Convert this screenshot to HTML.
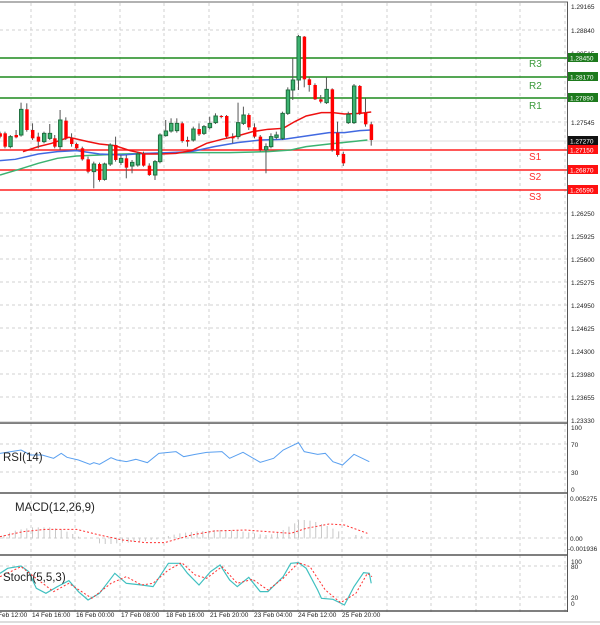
<!DOCTYPE html>
<html><head><meta charset="utf-8"><style>
html,body{margin:0;padding:0;background:#fff;width:600px;height:625px;overflow:hidden}
svg{display:block;font-family:"Liberation Sans",sans-serif}
</style></head><body>
<svg width="600" height="625" viewBox="0 0 600 625">
<rect width="600" height="625" fill="#fff"/>
<line x1="0" y1="2" x2="568" y2="2" stroke="#999" stroke-width="1.5"/>
<g stroke="#d0d0d0" stroke-width="1" stroke-dasharray="3,3">
<line x1="0" x2="567" y1="30" y2="30"/><line x1="0" x2="567" y1="122" y2="122"/><line x1="0" x2="567" y1="213" y2="213"/><line x1="0" x2="567" y1="236" y2="236"/><line x1="0" x2="567" y1="259" y2="259"/><line x1="0" x2="567" y1="282" y2="282"/><line x1="0" x2="567" y1="305" y2="305"/><line x1="0" x2="567" y1="328" y2="328"/><line x1="0" x2="567" y1="351" y2="351"/><line x1="0" x2="567" y1="374" y2="374"/><line x1="0" x2="567" y1="397" y2="397"/>
<line x1="0" x2="567" y1="444" y2="444"/><line x1="0" x2="567" y1="472" y2="472"/><line x1="0" x2="567" y1="538" y2="538"/><line x1="0" x2="567" y1="566" y2="566"/><line x1="0" x2="567" y1="597" y2="597"/>
<line x1="31" x2="31" y1="3" y2="612"/><line x1="75" x2="75" y1="3" y2="612"/><line x1="120" x2="120" y1="3" y2="612"/><line x1="164" x2="164" y1="3" y2="612"/><line x1="209" x2="209" y1="3" y2="612"/><line x1="253" x2="253" y1="3" y2="612"/><line x1="298" x2="298" y1="3" y2="612"/><line x1="342" x2="342" y1="3" y2="612"/><line x1="387" x2="387" y1="3" y2="612"/><line x1="431" x2="431" y1="3" y2="612"/><line x1="476" x2="476" y1="3" y2="612"/><line x1="520" x2="520" y1="3" y2="612"/><line x1="565" x2="565" y1="3" y2="612"/>
</g>
<line x1="0" x2="567" y1="141" y2="141" stroke="#ddd" stroke-width="1"/>
<!-- levels -->
<g stroke-width="1.5">
<line x1="0" x2="567" y1="58" y2="58" stroke="#1d8a1d"/>
<line x1="0" x2="567" y1="77" y2="77" stroke="#1d8a1d"/>
<line x1="0" x2="567" y1="98" y2="98" stroke="#1d8a1d"/>
<line x1="0" x2="567" y1="150" y2="150" stroke="#ff2020"/>
<line x1="0" x2="567" y1="170" y2="170" stroke="#ff2020"/>
<line x1="0" x2="567" y1="190" y2="190" stroke="#ff2020"/>
</g>
<g font-size="10" fill="#3c9a3c"><text x="529" y="67">R3</text><text x="529" y="89">R2</text><text x="529" y="109">R1</text></g>
<g font-size="10" fill="#ff3030"><text x="529" y="160">S1</text><text x="529" y="180">S2</text><text x="529" y="200">S3</text></g>
<!-- main plot in zoom coords -->
<g transform="scale(0.3827,0.3333)">
<g fill="none" stroke-width="1.5" vector-effect="non-scaling-stroke">
<polyline vector-effect="non-scaling-stroke" stroke="#3cb371" points="0,525 50,508 100,490 150,475 200,468 260,465 320,462 400,460 500,458 600,458 700,455 760,450 800,440 860,432 920,425 960,420"/>
<polyline vector-effect="non-scaling-stroke" stroke="#4169e1" points="0,482 40,478 100,462 150,455 200,452 260,462 320,465 380,460 440,458 500,455 560,440 620,428 680,420 740,418 800,408 860,398 900,398 940,392 970,390"/>
<polyline vector-effect="non-scaling-stroke" stroke="#ee1111" points="60,455 100,440 135,430 180,412 230,425 260,432 300,437 340,452 380,462 420,462 460,460 500,452 540,430 580,418 620,408 660,395 700,388 740,385 770,365 800,348 840,338 870,338 900,342 940,340 970,336"/>
</g>
<g stroke="#555" stroke-width="1">
<line vector-effect="non-scaling-stroke" x1="0" x2="0" y1="395" y2="415"/><line vector-effect="non-scaling-stroke" x1="13" x2="13" y1="395" y2="445"/><line vector-effect="non-scaling-stroke" x1="27" x2="27" y1="405" y2="445"/><line vector-effect="non-scaling-stroke" x1="42" x2="42" y1="390" y2="415"/><line vector-effect="non-scaling-stroke" x1="55" x2="55" y1="308" y2="410"/><line vector-effect="non-scaling-stroke" x1="70" x2="70" y1="310" y2="395"/><line vector-effect="non-scaling-stroke" x1="85" x2="85" y1="370" y2="420"/><line vector-effect="non-scaling-stroke" x1="100" x2="100" y1="398" y2="445"/><line vector-effect="non-scaling-stroke" x1="115" x2="115" y1="395" y2="430"/><line vector-effect="non-scaling-stroke" x1="130" x2="130" y1="372" y2="420"/><line vector-effect="non-scaling-stroke" x1="143" x2="143" y1="405" y2="445"/><line vector-effect="non-scaling-stroke" x1="157" x2="157" y1="330" y2="450"/><line vector-effect="non-scaling-stroke" x1="172" x2="172" y1="352" y2="420"/><line vector-effect="non-scaling-stroke" x1="187" x2="187" y1="400" y2="440"/><line vector-effect="non-scaling-stroke" x1="200" x2="200" y1="428" y2="450"/><line vector-effect="non-scaling-stroke" x1="215" x2="215" y1="440" y2="482"/><line vector-effect="non-scaling-stroke" x1="230" x2="230" y1="470" y2="520"/><line vector-effect="non-scaling-stroke" x1="245" x2="245" y1="485" y2="565"/><line vector-effect="non-scaling-stroke" x1="260" x2="260" y1="488" y2="545"/><line vector-effect="non-scaling-stroke" x1="273" x2="273" y1="488" y2="542"/><line vector-effect="non-scaling-stroke" x1="288" x2="288" y1="430" y2="498"/><line vector-effect="non-scaling-stroke" x1="302" x2="302" y1="410" y2="485"/><line vector-effect="non-scaling-stroke" x1="316" x2="316" y1="465" y2="495"/><line vector-effect="non-scaling-stroke" x1="330" x2="330" y1="465" y2="535"/><line vector-effect="non-scaling-stroke" x1="345" x2="345" y1="480" y2="520"/><line vector-effect="non-scaling-stroke" x1="360" x2="360" y1="455" y2="500"/><line vector-effect="non-scaling-stroke" x1="375" x2="375" y1="455" y2="500"/><line vector-effect="non-scaling-stroke" x1="390" x2="390" y1="490" y2="528"/><line vector-effect="non-scaling-stroke" x1="405" x2="405" y1="480" y2="540"/><line vector-effect="non-scaling-stroke" x1="418" x2="418" y1="400" y2="490"/><line vector-effect="non-scaling-stroke" x1="433" x2="433" y1="360" y2="410"/><line vector-effect="non-scaling-stroke" x1="447" x2="447" y1="355" y2="398"/><line vector-effect="non-scaling-stroke" x1="462" x2="462" y1="355" y2="398"/><line vector-effect="non-scaling-stroke" x1="476" x2="476" y1="365" y2="428"/><line vector-effect="non-scaling-stroke" x1="490" x2="490" y1="410" y2="440"/><line vector-effect="non-scaling-stroke" x1="505" x2="505" y1="380" y2="425"/><line vector-effect="non-scaling-stroke" x1="520" x2="520" y1="370" y2="408"/><line vector-effect="non-scaling-stroke" x1="533" x2="533" y1="375" y2="405"/><line vector-effect="non-scaling-stroke" x1="548" x2="548" y1="350" y2="388"/><line vector-effect="non-scaling-stroke" x1="563" x2="563" y1="340" y2="372"/><line vector-effect="non-scaling-stroke" x1="578" x2="578" y1="345" y2="355"/><line vector-effect="non-scaling-stroke" x1="592" x2="592" y1="345" y2="415"/><line vector-effect="non-scaling-stroke" x1="608" x2="608" y1="400" y2="430"/><line vector-effect="non-scaling-stroke" x1="622" x2="622" y1="308" y2="418"/><line vector-effect="non-scaling-stroke" x1="636" x2="636" y1="320" y2="375"/><line vector-effect="non-scaling-stroke" x1="650" x2="650" y1="340" y2="390"/><line vector-effect="non-scaling-stroke" x1="665" x2="665" y1="370" y2="415"/><line vector-effect="non-scaling-stroke" x1="680" x2="680" y1="405" y2="455"/><line vector-effect="non-scaling-stroke" x1="695" x2="695" y1="430" y2="520"/><line vector-effect="non-scaling-stroke" x1="708" x2="708" y1="400" y2="445"/><line vector-effect="non-scaling-stroke" x1="722" x2="722" y1="395" y2="418"/><line vector-effect="non-scaling-stroke" x1="738" x2="738" y1="335" y2="420"/><line vector-effect="non-scaling-stroke" x1="752" x2="752" y1="262" y2="345"/><line vector-effect="non-scaling-stroke" x1="765" x2="765" y1="175" y2="300"/><line vector-effect="non-scaling-stroke" x1="780" x2="780" y1="105" y2="270"/><line vector-effect="non-scaling-stroke" x1="795" x2="795" y1="108" y2="262"/><line vector-effect="non-scaling-stroke" x1="808" x2="808" y1="232" y2="275"/><line vector-effect="non-scaling-stroke" x1="823" x2="823" y1="250" y2="300"/><line vector-effect="non-scaling-stroke" x1="838" x2="838" y1="285" y2="310"/><line vector-effect="non-scaling-stroke" x1="853" x2="853" y1="232" y2="312"/><line vector-effect="non-scaling-stroke" x1="868" x2="868" y1="265" y2="455"/><line vector-effect="non-scaling-stroke" x1="882" x2="882" y1="365" y2="470"/><line vector-effect="non-scaling-stroke" x1="897" x2="897" y1="455" y2="498"/><line vector-effect="non-scaling-stroke" x1="910" x2="910" y1="335" y2="372"/><line vector-effect="non-scaling-stroke" x1="925" x2="925" y1="252" y2="372"/><line vector-effect="non-scaling-stroke" x1="940" x2="940" y1="255" y2="345"/><line vector-effect="non-scaling-stroke" x1="955" x2="955" y1="295" y2="380"/><line vector-effect="non-scaling-stroke" x1="970" x2="970" y1="365" y2="437"/>
</g>
<g fill="#ff0000"><rect x="-4" y="400" width="9" height="10"/><rect x="9" y="400" width="9" height="40"/><rect x="38" y="405" width="9" height="7"/><rect x="66" y="328" width="9" height="62"/><rect x="81" y="390" width="9" height="25"/><rect x="96" y="410" width="9" height="15"/><rect x="139" y="415" width="9" height="25"/><rect x="168" y="362" width="9" height="53"/><rect x="183" y="415" width="9" height="17"/><rect x="196" y="432" width="9" height="13"/><rect x="211" y="445" width="9" height="33"/><rect x="226" y="478" width="9" height="37"/><rect x="256" y="492" width="9" height="48"/><rect x="298" y="435" width="9" height="45"/><rect x="326" y="475" width="9" height="28"/><rect x="371" y="462" width="9" height="35"/><rect x="386" y="497" width="9" height="28"/><rect x="472" y="370" width="9" height="53"/><rect x="486" y="420" width="9" height="5"/><rect x="516" y="387" width="9" height="16"/><rect x="574" y="348" width="9" height="3"/><rect x="588" y="348" width="9" height="62"/><rect x="604" y="410" width="9" height="5"/><rect x="646" y="345" width="9" height="37"/><rect x="661" y="382" width="9" height="28"/><rect x="676" y="410" width="9" height="40"/><rect x="791" y="110" width="9" height="128"/><rect x="804" y="238" width="9" height="17"/><rect x="819" y="255" width="9" height="43"/><rect x="834" y="298" width="9" height="7"/><rect x="864" y="268" width="9" height="182"/><rect x="878" y="398" width="9" height="67"/><rect x="893" y="462" width="9" height="28"/><rect x="936" y="258" width="9" height="82"/><rect x="951" y="338" width="9" height="35"/><rect x="966" y="373" width="9" height="47"/></g>
<g fill="#3cb371" stroke="#1f6f3f" stroke-width="1"><rect vector-effect="non-scaling-stroke" x="23" y="410" width="9" height="30"/><rect vector-effect="non-scaling-stroke" x="51" y="328" width="9" height="77"/><rect vector-effect="non-scaling-stroke" x="111" y="400" width="9" height="25"/><rect vector-effect="non-scaling-stroke" x="126" y="400" width="9" height="15"/><rect vector-effect="non-scaling-stroke" x="153" y="360" width="9" height="80"/><rect vector-effect="non-scaling-stroke" x="241" y="492" width="9" height="23"/><rect vector-effect="non-scaling-stroke" x="269" y="492" width="9" height="46"/><rect vector-effect="non-scaling-stroke" x="284" y="435" width="9" height="57"/><rect vector-effect="non-scaling-stroke" x="312" y="475" width="9" height="12"/><rect vector-effect="non-scaling-stroke" x="341" y="487" width="9" height="11"/><rect vector-effect="non-scaling-stroke" x="356" y="462" width="9" height="33"/><rect vector-effect="non-scaling-stroke" x="401" y="485" width="9" height="40"/><rect vector-effect="non-scaling-stroke" x="414" y="405" width="9" height="80"/><rect vector-effect="non-scaling-stroke" x="429" y="393" width="9" height="14"/><rect vector-effect="non-scaling-stroke" x="443" y="370" width="9" height="23"/><rect vector-effect="non-scaling-stroke" x="458" y="370" width="9" height="22"/><rect vector-effect="non-scaling-stroke" x="501" y="387" width="9" height="33"/><rect vector-effect="non-scaling-stroke" x="529" y="380" width="9" height="20"/><rect vector-effect="non-scaling-stroke" x="544" y="370" width="9" height="13"/><rect vector-effect="non-scaling-stroke" x="559" y="348" width="9" height="20"/><rect vector-effect="non-scaling-stroke" x="618" y="368" width="9" height="42"/><rect vector-effect="non-scaling-stroke" x="632" y="345" width="9" height="25"/><rect vector-effect="non-scaling-stroke" x="691" y="440" width="9" height="10"/><rect vector-effect="non-scaling-stroke" x="704" y="410" width="9" height="30"/><rect vector-effect="non-scaling-stroke" x="718" y="405" width="9" height="7"/><rect vector-effect="non-scaling-stroke" x="734" y="340" width="9" height="75"/><rect vector-effect="non-scaling-stroke" x="748" y="270" width="9" height="70"/><rect vector-effect="non-scaling-stroke" x="761" y="240" width="9" height="30"/><rect vector-effect="non-scaling-stroke" x="776" y="110" width="9" height="130"/><rect vector-effect="non-scaling-stroke" x="849" y="268" width="9" height="40"/><rect vector-effect="non-scaling-stroke" x="906" y="343" width="9" height="25"/><rect vector-effect="non-scaling-stroke" x="921" y="258" width="9" height="110"/></g>
</g>
<!-- panel borders -->
<g stroke="#555" stroke-width="1.5">
<line x1="0" x2="568" y1="423" y2="423"/><line x1="0" x2="568" y1="493" y2="493"/><line x1="0" x2="568" y1="555" y2="555"/><line x1="0" x2="568" y1="611" y2="611"/>
</g>
<line x1="0" x2="568" y1="422" y2="422" stroke="#bbb"/>
<!-- lower panels in zoom coords -->
<g transform="translate(0,420) scale(0.3827,0.3333)" fill="none">
<polyline vector-effect="non-scaling-stroke" stroke="#5aa0f0" stroke-width="1" points="0,100 55,90 80,105 110,105 140,115 160,100 175,112 205,120 235,133 245,128 260,133 290,113 305,120 330,125 355,118 385,128 415,100 460,95 480,110 510,103 540,97 580,95 600,115 635,97 680,127 715,115 740,90 780,68 795,95 830,103 850,100 870,125 895,135 925,103 965,125"/>
<g stroke="#c8c8c8" stroke-width="1">
<path vector-effect="non-scaling-stroke" d="M10 355V345M25 355V338M40 355V332M55 355V328M70 355V325M85 355V322M100 355V322M115 355V322M130 355V322M145 355V325M160 355V328M175 355V335M190 355V342M205 355V350M260 355V370M275 355V372M290 355V372M305 355V370M320 355V368M335 355V368M350 355V366M365 355V365M380 355V363M395 355V360M410 355V358M440 355V348M455 355V344M470 355V340M485 355V338M500 355V336M515 355V334M530 355V333M545 355V332M560 355V330M575 355V330M590 355V330M605 355V331M620 355V333M635 355V335M650 355V337M665 355V340M680 355V343M695 355V345M710 355V343M725 355V338M740 355V330M755 355V320M770 355V310M780 355V300M795 355V300M810 355V302M825 355V306M840 355V312M855 355V318M870 355V326M885 355V334M930 355V345M945 355V348"/>
</g>
<polyline vector-effect="non-scaling-stroke" stroke="#ff3030" stroke-width="1" stroke-dasharray="2,2" points="0,350 60,335 120,328 200,328 260,345 320,360 380,368 430,368 500,345 560,333 640,330 700,335 760,340 800,325 860,312 900,315 960,340"/>
<polyline vector-effect="non-scaling-stroke" stroke="#40c0c0" stroke-width="1.2" points="0,460 20,445 55,438 75,455 95,505 120,520 150,500 180,482 205,515 230,540 260,520 300,460 330,490 370,495 400,500 440,430 470,430 490,460 520,495 550,455 575,435 600,480 620,500 650,472 680,515 700,515 740,470 760,430 780,428 800,445 830,510 840,535 870,538 900,555 925,500 950,458 965,460 970,490"/>
<polyline vector-effect="non-scaling-stroke" stroke="#ff3030" stroke-width="1" stroke-dasharray="2,2" points="0,470 55,440 100,480 140,515 180,490 240,535 290,490 330,470 370,495 400,490 440,450 475,428 510,465 540,475 580,440 620,490 660,478 700,510 740,475 780,428 810,440 850,510 890,548 930,520 960,460 972,470"/>
</g>
<g font-size="11.5" fill="#222"><text x="3" y="461">RSI(14)</text><text x="15" y="511">MACD(12,26,9)</text><text x="3" y="581">Stoch(5,5,3)</text></g>
<!-- right axis -->
<rect x="568" y="0" width="32" height="625" fill="#fff"/>
<line x1="567.5" y1="2" x2="567.5" y2="612" stroke="#555" stroke-width="1"/>
<g font-size="6.5" fill="#222">
<text x="571" y="9">1.29165</text><text x="571" y="33">1.28840</text><text x="571" y="56">1.28515</text><text x="571" y="125">1.27545</text><text x="571" y="216">1.26250</text><text x="571" y="239">1.25925</text><text x="571" y="262">1.25600</text><text x="571" y="285">1.25275</text><text x="571" y="308">1.24950</text><text x="571" y="331">1.24625</text><text x="571" y="354">1.24300</text><text x="571" y="377">1.23980</text><text x="571" y="400">1.23655</text><text x="571" y="423">1.23330</text>
<text x="571" y="430">100</text><text x="571" y="447">70</text><text x="571" y="475">30</text><text x="571" y="492">0</text>
<text x="570" y="501">0.005275</text><text x="570" y="541">0.00</text><text x="568" y="551">-0.001936</text>
<text x="571" y="564">100</text><text x="571" y="569">80</text><text x="571" y="600">20</text><text x="571" y="606">0</text>
</g>
<g font-size="6.5" fill="#fff">
<rect x="568" y="53" width="30" height="9" fill="#1d7a1d"/><text x="570" y="60.5">1.28450</text>
<rect x="568" y="72" width="30" height="9" fill="#1d7a1d"/><text x="570" y="79.5">1.28170</text>
<rect x="568" y="93" width="30" height="9" fill="#1d7a1d"/><text x="570" y="100.5">1.27890</text>
<rect x="568" y="136" width="30" height="9" fill="#111"/><text x="570" y="143.5">1.27270</text>
<rect x="568" y="145" width="30" height="9" fill="#ff1010"/><text x="570" y="152.5">1.27150</text>
<rect x="568" y="165" width="30" height="9" fill="#ff1010"/><text x="570" y="172.5">1.26870</text>
<rect x="568" y="185" width="30" height="9" fill="#ff1010"/><text x="570" y="192.5">1.26590</text>
</g>
<g font-size="6.5" fill="#222">
<text x="-2" y="617">Feb 12:00</text><text x="32" y="617">14 Feb 16:00</text><text x="76" y="617">16 Feb 00:00</text><text x="121" y="617">17 Feb 08:00</text><text x="166" y="617">18 Feb 16:00</text><text x="210" y="617">21 Feb 20:00</text><text x="254" y="617">23 Feb 04:00</text><text x="298" y="617">24 Feb 12:00</text><text x="342" y="617">25 Feb 20:00</text>
</g>
<line x1="0" y1="622" x2="600" y2="622" stroke="#bbb"/>
</svg>
</body></html>
